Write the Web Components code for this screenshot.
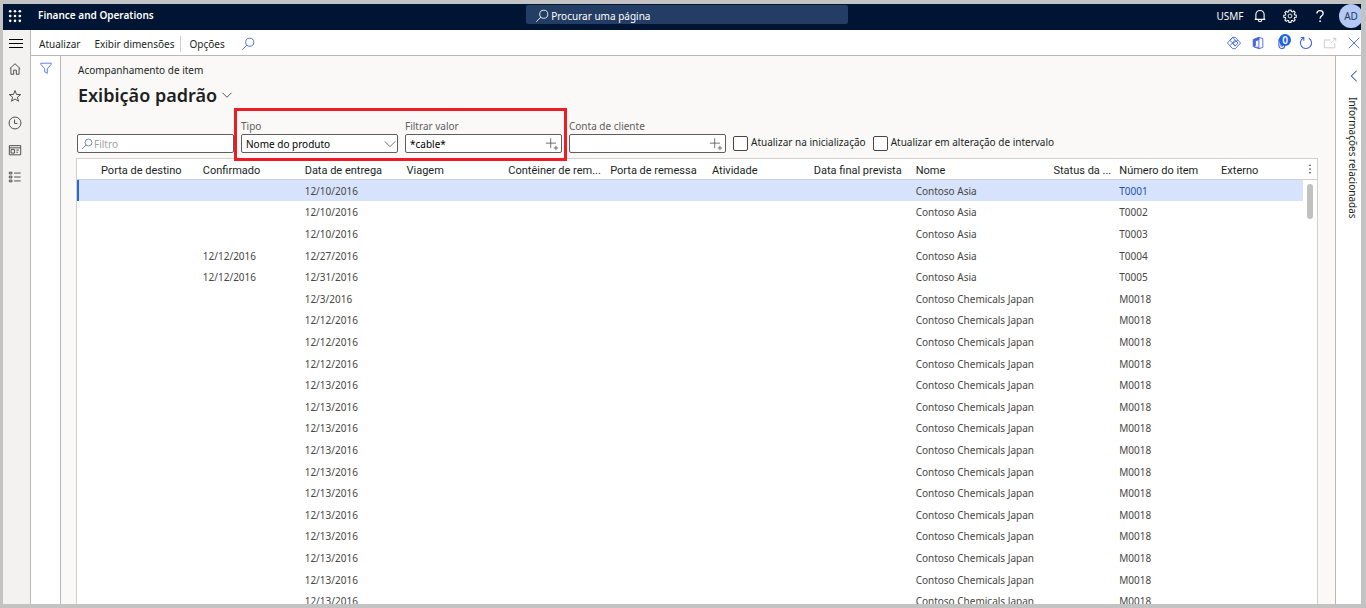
<!DOCTYPE html>
<html lang="pt-BR">
<head>
<meta charset="utf-8">
<title>Finance and Operations</title>
<style>
  body { margin: 0; background: #c3c3c3; color: #201f1e; font: 10px/16px "Noto Sans", "Open Sans", sans-serif; }
</style>
</head>
<body>
<app-shell>
  <top-bar slot="top"></top-bar>
  <nav-rail slot="nav"></nav-rail>
  <action-bar slot="actions"></action-bar>
  <filter-pane slot="filters"></filter-pane>
  <page-heading crumb="Acompanhamento de item">Exibição padrão</page-heading>
  <filter-row>
    <text-field icon="search" placeholder="Filtro"></text-field>
    <call-out>
      <select-field label="Tipo" value="Nome do produto"></select-field>
      <text-field label="Filtrar valor" value="*cable*" picker></text-field>
    </call-out>
    <text-field label="Conta de cliente" picker></text-field>
    <check-field>Atualizar na inicialização</check-field>
    <check-field>Atualizar em alteração de intervalo</check-field>
  </filter-row>
  <item-grid></item-grid>
  <side-panel slot="side">Informações relacionadas</side-panel>
</app-shell>

<script>
const ICONS = {
  waffle: '<g fill="currentColor" stroke="none"><circle cx="2.5" cy="2.5" r="1.5"/><circle cx="8" cy="2.5" r="1.5"/><circle cx="13.5" cy="2.5" r="1.5"/><circle cx="2.5" cy="8" r="1.5"/><circle cx="8" cy="8" r="1.5"/><circle cx="13.5" cy="8" r="1.5"/><circle cx="2.5" cy="13.5" r="1.5"/><circle cx="8" cy="13.5" r="1.5"/><circle cx="13.5" cy="13.5" r="1.5"/></g>',
  search: '<circle cx="10" cy="6" r="4.6"/><path d="M6.7 9.3 1.5 14.5"/>',
  bell: '<path d="M3.3 11.8V6.4a4.7 4.7 0 0 1 9.4 0v5.4ZM2 11.8h12M6.2 12v.8a1.8 1.8 0 0 0 3.6 0V12" stroke-width="1.3"/>',
  gear: '<circle cx="8" cy="8" r="2.2"/><path stroke-width="1.2" d="m6.8 1.3-.4 1.9-1 .4-1.7-1.1-1.6 1.6 1.1 1.7-.4 1-1.9.4v2.2l1.9.4.4 1-1.1 1.7 1.6 1.6 1.7-1.1 1 .4.4 1.9h2.4l.4-1.9 1-.4 1.7 1.1 1.6-1.6-1.1-1.7.4-1 1.9-.4V7l-1.9-.4-.4-1 1.1-1.7-1.6-1.6-1.7 1.1-1-.4-.4-1.9Z"/>',
  help: '<path stroke-width="1.5" d="M4.4 5.2C4.5 3 6 1.9 8 1.9c2.2 0 3.6 1.2 3.6 3.1 0 2.8-3.5 2.8-3.5 6"/><circle cx="8.1" cy="13.9" r="1" fill="currentColor" stroke="none"/>',
  menu: '<path d="M1 4.5h14M1 8.5h14M1 12.5h14"/>',
  home: '<path d="M2 7.6 8 2l6 5.6M3.3 6.8v7.2h3.2V9.3h3V14h3.2V6.8"/>',
  star: '<path d="m8 1.7 1.7 4.5 4.8.2-3.8 3 1.3 4.6L8 11.4 4 14l1.3-4.6-3.8-3 4.8-.2Z"/>',
  clock: '<circle cx="8" cy="8" r="6.8"/><path d="M7.5 4v4.5h3.3"/>',
  workspace: '<path d="M1.5 3h13v10.5h-13ZM1.5 5.5h13M3.5 7.5h4v4h-4ZM9.5 8h3M9.5 10.5h2"/>',
  modules: '<path d="M1.5 2.5h3v2h-3ZM1.5 7h3v2h-3ZM1.5 11.5h3v2h-3ZM7 3.5h7.5M7 8h7.5M7 12.5h7.5"/>',
  funnel: '<path d="M2 2.5h12v1.2L9.5 8.8v5.2l-3-1.6V8.8L2 3.7Z"/>',
  diamond: '<path d="M6.5 1.5h3L15.5 8l-6 6.5h-3L.5 8ZM3.5 5l3-3.5L12.5 8l-3 3.5L6.5 8l6-3M3.5 11 9.5 4.5M3.5 5l6 6.5"/>',
  office: '<path d="M9 1.5 13.5 3v10L9 14.5 3.5 12.5 9 13"/><path d="M9 1.5v13"/><path fill="currentColor" d="M9 1.5 2.5 4v8l2.5-1V5.5L9 4.2Z"/>',
  clip: '<path stroke-width="1.3" d="M11 4v7a3 3 0 0 1-6.5 0V4.5a2.2 2.2 0 0 1 4.3 0v6a.8.8 0 0 1-2 0V5"/>',
  refresh: '<path stroke-width="1.2" d="M5 2.3a6.4 6.4 0 1 0 6.3.2M2 1.8h3.5v3.5"/>',
  popout: '<path d="M8.5 4.5h-7v9h12V8.5M8.5 8.5l5.5-5.5M11 2.5h3.5V6"/>',
  close: '<path d="m2 2 12 12m0-12-12 12"/>',
  down: '<path d="m2 5 6 6 6-6"/>',
  left: '<path d="M11 2 5 8l6 6" stroke-width="1.2"/>',
  picker: '<path d="M6.5 1.5v11M1 7h11.5"/><path d="M12.5 10v5M10 12.5h5"/>',
  more: '<g fill="currentColor" stroke="none"><circle cx="8" cy="3" r="1"/><circle cx="8" cy="8" r="1"/><circle cx="8" cy="13" r="1"/></g>'
};

const RESET = `<style>
  *, *::before { box-sizing: border-box; }
  button { padding: 0; border: 0; background: none; color: inherit; font: inherit; cursor: pointer; display: grid; place-items: center; }
</style>`;
const esc = s => (s || '').replace(/[&<>"]/g, c => '&#' + c.charCodeAt(0) + ';');

function define(tag, render) {
  customElements.define(tag, class extends HTMLElement {
    constructor() {
      super();
      this.attachShadow({ mode: 'open' });
    }
    connectedCallback() {
      const t = document.createElement('template');
      t.innerHTML = RESET + render(this);
      this.shadowRoot.replaceChildren(t.content.cloneNode(true));
    }
  });
}

define('ui-icon', el => `<style>
  :host { display: block; width: 14px; height: 14px; flex: none; }
  svg { display: block; width: 100%; height: 100%; fill: none; stroke: currentColor; }
</style><svg viewBox="0 0 16 16" aria-hidden="true">${ICONS[el.getAttribute('name')]}</svg>`);

define('app-shell', () => `<style>
  :host { display: grid; box-sizing: border-box; height: 100vh; padding: 4px 5px 4px 3px; overflow: hidden;
    grid-template: auto auto minmax(0, 1fr) / 28px 30px minmax(0, 1fr) 26px;
    grid-template-areas: "top top top top" "nav act act act" "nav fil main side"; }
  slot[name=top] { grid-area: top; display: grid; }
  slot[name=nav] { grid-area: nav; display: grid; }
  slot[name=actions] { grid-area: act; display: grid; }
  slot[name=filters] { grid-area: fil; display: grid; }
  slot[name=side] { grid-area: side; display: grid; }
  main { grid-area: main; display: flex; flex-direction: column; min-width: 0; min-height: 0; padding: 6px 17px 0 15px; background: #faf9f8; }
</style>
<slot name="top"></slot><slot name="nav"></slot><slot name="actions"></slot><slot name="filters"></slot>
<main><slot></slot></main><slot name="side"></slot>`);

define('top-bar', () => `<style>
  :host { display: grid; grid-template-columns: 51fr 322px 50fr; height: 26px; background: #001433; color: #fff; overflow: hidden; }
  .brand { display: flex; align-items: center; gap: 16px; padding: 0 0 4px 5px; }
  .brand b { font-weight: 600; padding-bottom: 2px; }
  label { display: flex; align-items: center; gap: 2px; height: 19px; margin-top: 1px; padding: 2px 0 0 9px; background: #243d64; border-radius: 2px; }
  input { flex: 1; min-width: 0; height: 17px; padding: 0; border: 0; outline: 0; background: none; color: inherit; font: inherit; }
  input::placeholder { color: #fff; opacity: 1; }
  .tools { display: flex; align-items: center; justify-content: flex-end; padding-bottom: 3px; }
  .tools button { width: 30px; height: 22px; }
  .tools .me { width: 24px; height: 24px; margin: 0 -2px 0 4px; border-radius: 50%; background: #b4c8f4; color: #243a5e; }
</style>
<div class="brand"><button aria-label="Aplicativos"><ui-icon name="waffle"></ui-icon></button><b>Finance and Operations</b></div>
<label><ui-icon name="search"></ui-icon><input type="text" aria-label="Procurar uma página" placeholder="Procurar uma página"></label>
<div class="tools">
  <button class="org">USMF</button>
  <button aria-label="Notificações"><ui-icon name="bell"></ui-icon></button>
  <button aria-label="Configurações"><ui-icon name="gear"></ui-icon></button>
  <button aria-label="Ajuda"><ui-icon name="help"></ui-icon></button>
  <button class="me">AD</button>
</div>`);

define('nav-rail', () => `<style>
  :host { display: block; background: #f3f2f1; border-right: 1px solid #bab8b7; color: #3b3a39; }
  nav { display: flex; flex-direction: column; }
  button { height: 27px; padding: 0 3px 2px 0; }
  .toggle { height: 26px; padding: 0 2px 0 0; color: #000; }
  .toggle ui-icon { width: 16px; height: 16px; }
</style>
<nav>
  <button class="toggle" aria-label="Expandir"><ui-icon name="menu"></ui-icon></button>
  <button aria-label="Início"><ui-icon name="home"></ui-icon></button>
  <button aria-label="Favoritos"><ui-icon name="star"></ui-icon></button>
  <button aria-label="Recentes"><ui-icon name="clock"></ui-icon></button>
  <button aria-label="Workspaces"><ui-icon name="workspace"></ui-icon></button>
  <button aria-label="Módulos"><ui-icon name="modules"></ui-icon></button>
</nav>`);

define('action-bar', () => `<style>
  :host { display: flex; align-items: center; height: 26px; box-sizing: border-box; padding: 0 0 0 8px; background: #fff; border-bottom: 1px solid #bab8b7; }
  .menu, .tools { display: flex; align-items: center; }
  .menu { gap: 14px; flex: 1; padding-top: 2px; }
  .last { padding: 0 2px 0 8px; margin-left: -8px; border-left: 1px solid #d2d0ce; }
  .menu ui-icon, .tools { color: #3f62e0; }
  .tools { margin-right: -5px; }
  .tools button { width: 24px; height: 24px; position: relative; }
  .tools .off { color: #c8c6c4; }
  .badge { position: absolute; top: 3px; left: 9px; width: 12px; height: 12px; border-radius: 50%; background: #1f62e0; color: #fff; line-height: 12px; font-weight: 600; }
</style>
<div class="menu">
  <button>Atualizar</button><button>Exibir dimensões</button><button class="last">Opções</button>
  <button aria-label="Procurar ações"><ui-icon name="search"></ui-icon></button>
</div>
<div class="tools">
  <button aria-label="Power Apps"><ui-icon name="diamond"></ui-icon></button>
  <button aria-label="Abrir no Microsoft Office"><ui-icon name="office"></ui-icon></button>
  <button aria-label="Anexos"><ui-icon name="clip"></ui-icon><span class="badge">0</span></button>
  <button aria-label="Recarregar"><ui-icon name="refresh"></ui-icon></button>
  <button class="off" aria-label="Nova janela"><ui-icon name="popout"></ui-icon></button>
  <button aria-label="Fechar"><ui-icon name="close"></ui-icon></button>
</div>`);

define('filter-pane', () => `<style>
  :host { display: block; background: #fff; border-right: 1px solid #bab8b7; color: #4f6bed; }
  button { width: 100%; height: 23px; }
</style><button aria-label="Mostrar filtros"><ui-icon name="funnel"></ui-icon></button>`);

define('page-heading', el => `<style>
  :host { display: block; padding: 0 0 0 2px; }
  h1 { display: flex; align-items: center; gap: 4px; margin: 4px 0 0; font-size: 18px; line-height: 26px; font-weight: 600; }
  ui-icon { width: 12px; height: 12px; }
</style>
<div>${esc(el.getAttribute('crumb'))}</div>
<h1><slot></slot><button aria-label="Alterar exibição"><ui-icon name="down"></ui-icon></button></h1>`);

define('filter-row', () => `<style>
  :host { display: flex; align-items: flex-end; gap: 7px; padding: 10px 0 5px 1px; }
</style><slot></slot>`);

define('call-out', () => `<style>
  :host { display: flex; align-items: flex-end; gap: 7px; position: relative; }
  .frame { position: absolute; inset: -10px -5px -8px -7px; border: 3px solid #ed1c24; pointer-events: none; z-index: 1; }
</style><slot></slot><div class="frame"></div>`);

const FIELD = `
  :host { display: block; width: 157px; }
  label { display: block; color: #605e5c; }
  .box { position: relative; display: flex; align-items: center; height: 19px; padding: 0 2px 0 3px; border: 1px solid #605e5c; border-radius: 2px; background: #fff; }
  .box button { color: #605e5c; }
  input, select { flex: 1; min-width: 0; height: 17px; padding: 0 1px; border: 0; outline: 0; background: none; color: #000; font: inherit; }
`;

define('text-field', el => `<style>${FIELD}
  input::placeholder { color: #a19f9d; opacity: 1; }
  .box > ui-icon { width: 12px; height: 12px; color: #4a6a8a; }
</style>
${el.hasAttribute('label') ? `<label for="f">${esc(el.getAttribute('label'))}</label>` : ''}
<div class="box">${el.hasAttribute('icon') ? `<ui-icon name="${el.getAttribute('icon')}"></ui-icon>` : ''}
<input id="f" type="text" value="${esc(el.getAttribute('value'))}" placeholder="${esc(el.getAttribute('placeholder'))}" ${el.hasAttribute('label') ? '' : `aria-label="${esc(el.getAttribute('placeholder'))}"`}>
${el.hasAttribute('picker') ? '<button aria-label="Procurar valor"><ui-icon name="picker"></ui-icon></button>' : ''}</div>`);

define('select-field', el => `<style>${FIELD}
  select { appearance: none; }
  .box > ui-icon { position: absolute; right: 0; top: 2px; color: #605e5c; pointer-events: none; }
</style>
<label for="f">${esc(el.getAttribute('label'))}</label>
<div class="box"><select id="f"><option>${esc(el.getAttribute('value'))}</option></select><ui-icon name="down"></ui-icon></div>`);

define('check-field', () => `<style>
  :host { display: block; }
  label { display: flex; align-items: flex-end; gap: 3px; padding-bottom: 2px; }
  input { appearance: none; flex: none; width: 15px; height: 15px; margin: 0; border: 1px solid #484644; border-radius: 2px; background: #fff; }
  input:checked { background: #2266e3; }
  span { padding-bottom: 1px; }
</style><label><input type="checkbox"><span><slot></slot></span></label>`);

const HEADS = ['Porta de destino', 'Confirmado', 'Data de entrega', 'Viagem', 'Contêiner de rem...', 'Porta de remessa', 'Atividade', 'Data final prevista', 'Nome', 'Status da ...', 'Número do item', 'Externo'];
const ROWS = [
  ['', '12/10/2016', 'Contoso Asia', 'T0001'],
  ['', '12/10/2016', 'Contoso Asia', 'T0002'],
  ['', '12/10/2016', 'Contoso Asia', 'T0003'],
  ['12/12/2016', '12/27/2016', 'Contoso Asia', 'T0004'],
  ['12/12/2016', '12/31/2016', 'Contoso Asia', 'T0005'],
  ...['12/3/2016', '12/12/2016', '12/12/2016', '12/12/2016', ...Array(11).fill('12/13/2016')]
    .map(date => ['', date, 'Contoso Chemicals Japan', 'M0018'])
];

define('item-grid', () => `<style>
  :host { display: block; position: relative; flex: 1; min-height: 0; overflow: hidden; background: #fff; border: 1px solid #d2d0ce; border-bottom: 0; }
  table { width: 100%; table-layout: fixed; border-collapse: separate; border-spacing: 0; }
  th, td { padding: 0 0 0 6px; text-align: left; white-space: nowrap; }
  th { height: 21px; padding-top: 3px; font: 400 11px/16px Roboto, "Open Sans", sans-serif; border-bottom: 1px solid #d2d0ce; color: #201f1e; }
  th.num { text-align: right; padding-right: 2px; }
  td { height: 22px; line-height: 20px; color: #484644; }
  tr:nth-child(5n+1) td, tr:nth-child(5n+4) td { height: 21px; }
  .mark { width: 18px; padding: 0; }
  .on td { background: #d7e3fc; }
  .on .mark { border-left: 2px solid #2266e3; }
  a { color: #1f4fb4; text-decoration: none; }
  .more { position: absolute; top: 4px; right: 1px; }
  .more ui-icon { width: 12px; height: 12px; }
  .track { position: absolute; top: 21px; right: 0; bottom: 0; width: 14px; padding: 4px 4px 0; background: #fff; }
  .thumb { height: 35px; border-radius: 3px; background: #c1c1c1; }
</style>
<table>
  <thead><tr><th class="mark"></th>${HEADS.map((h, i) => `<th${i === 9 ? ' class="num"' : ''}>${h}</th>`).join('')}</tr></thead>
  <tbody>${ROWS.map(([confirmed, due, name, item], i) => `<tr${i ? '' : ' class="on"'}><td class="mark"></td><td></td><td>${confirmed}</td><td>${due}</td><td></td><td></td><td></td><td></td><td></td><td>${name}</td><td></td><td>${i ? item : `<a href="#${item}">${item}</a>`}</td><td></td></tr>`).join('')}</tbody>
</table>
<button class="more" aria-label="Mais opções"><ui-icon name="more"></ui-icon></button>
<div class="track"><div class="thumb"></div></div>`);

define('side-panel', () => `<style>
  :host { display: flex; flex-direction: column; align-items: flex-end; gap: 14px; padding: 13px 0 0; background: #fff; border-left: 1px solid #bab8b7; }
  button { width: 14px; color: #2b579a; }
  .title { writing-mode: vertical-rl; white-space: nowrap; }
</style><button aria-label="Expandir painel"><ui-icon name="left"></ui-icon></button><div class="title"><slot></slot></div>`);
</script>
</body>
</html>
